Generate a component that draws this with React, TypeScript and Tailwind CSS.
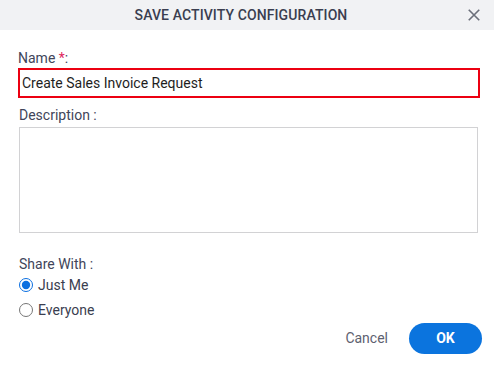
import { useState } from "react"

export default function App() {
  const [name, setName] = useState("Create Sales Invoice Request")
  const [share, setShare] = useState("me")

  return (
    <div className="w-[494px] h-[367px] bg-white flex flex-col" style={{ fontFamily: "Roboto, 'Liberation Sans', sans-serif" }}>
      <div className="h-[30px] bg-[#f1f2f4] flex items-center justify-center relative pr-[12px]">
        <h2 className="text-[14px] font-medium text-[#3a3e50] tracking-[0.1px]">SAVE ACTIVITY CONFIGURATION</h2>
        <button className="absolute right-[11px] top-[6px] text-[#6b6f7a]">
          <svg width="18" height="18" viewBox="0 0 24 24" fill="none" stroke="currentColor" strokeWidth="2.2">
            <path d="M5 5l14 14M19 5L5 19" />
          </svg>
        </button>
      </div>

      <div className="flex flex-col px-[18px] pt-[19px]">
        <label className="text-[14px] text-[#41455a] leading-[18px]">
          Name <span className="text-[#e0245e]">*</span>:
        </label>
        <input
          value={name}
          onChange={(e) => setName(e.target.value)}
          className="mt-[1px] w-[462px] h-[30px] border-2 border-[#ec0011] px-[2px] text-[14px] text-[#1e1e1e] outline-none"
        />
        <label className="mt-[8px] ml-[1px] text-[14px] text-[#41455a] leading-[18px]">Description :</label>
        <textarea className="mt-[3px] ml-[1px] w-[459px] h-[106px] border border-[#d2d2d4] resize-none outline-none" />

        <div className="mt-[22px] ml-[1px] text-[14px] text-[#41455a] leading-[18px]">Share With :</div>
        <label className="mt-[3px] ml-[1px] flex items-center gap-[5px] text-[14px] text-[#3a3e50] h-[18px]">
          <input type="radio" checked={share === "me"} onChange={() => setShare("me")} className="w-[14px] h-[14px] m-0 accent-[#0b6fe0]" />
          Just Me
        </label>
        <label className="mt-[7px] ml-[1px] flex items-center gap-[5px] text-[14px] text-[#3a3e50] h-[18px]">
          <input type="radio" checked={share === "all"} onChange={() => setShare("all")} className="w-[14px] h-[14px] m-0 accent-[#0b6fe0]" />
          Everyone
        </label>
      </div>

      <div className="flex justify-end items-center gap-[21px] pr-[12px] mt-[4px]">
        <button className="text-[14px] text-[#5d6170]">Cancel</button>
        <button className="w-[73px] h-[31px] rounded-full bg-[#0b74de] text-white text-[14px] font-bold">OK</button>
      </div>
    </div>
  )
}
